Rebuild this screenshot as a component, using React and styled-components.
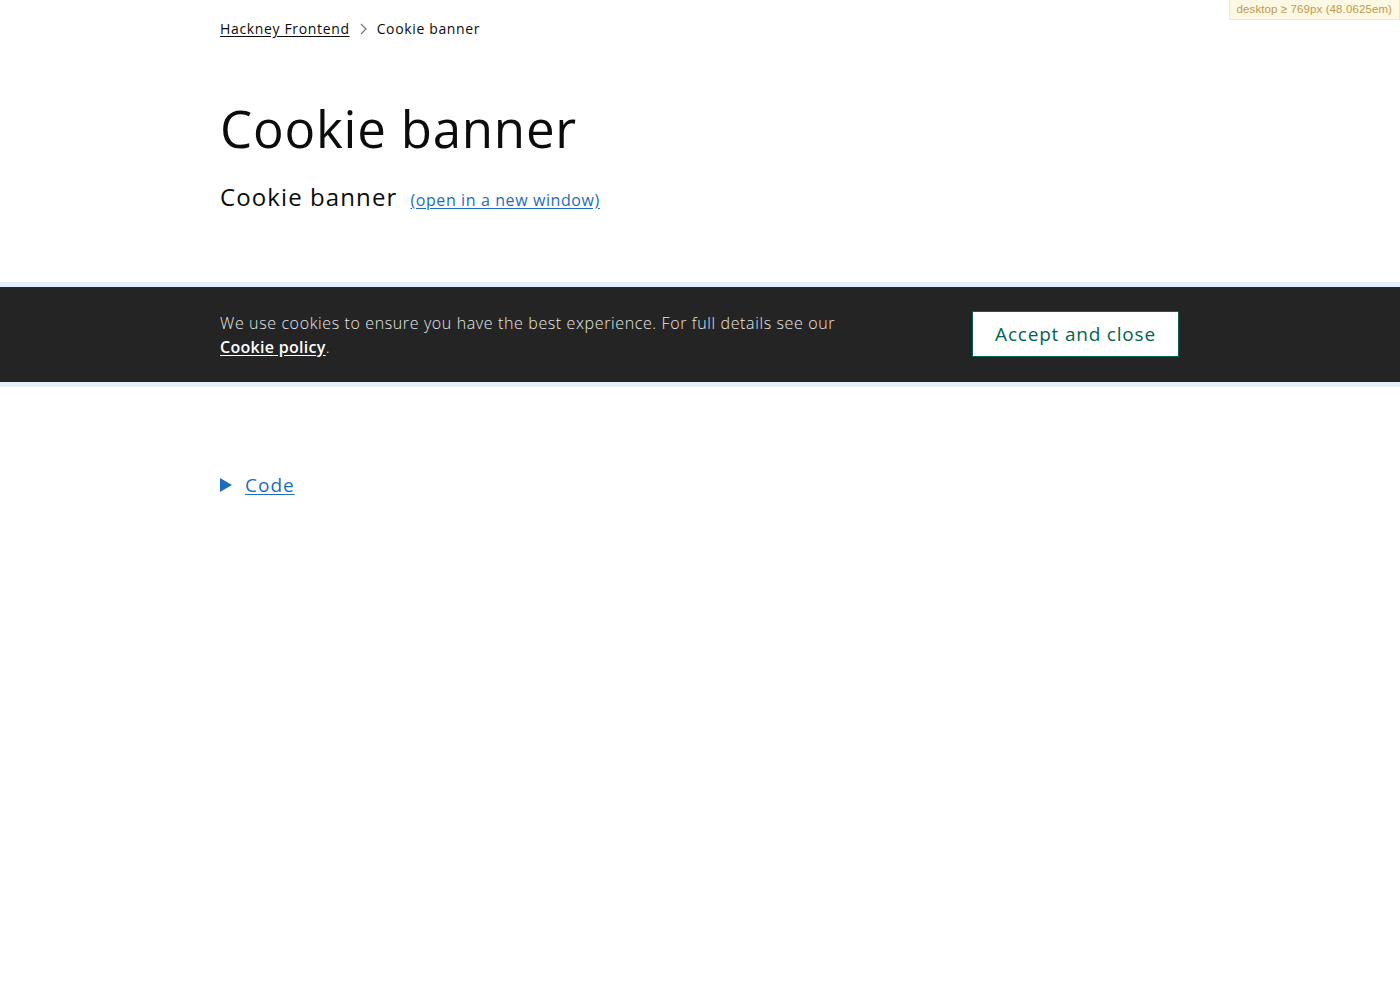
import React from "react";
import styled, { createGlobalStyle } from "styled-components";

const Global = createGlobalStyle`
    html, body {
        margin: 0;
        padding: 0;
        background: #fff;
        font-family: "Open Sans", "Liberation Sans", sans-serif;
        color: #0b0c0c;
    }
`

const MediaBadge = styled.div`
    position: absolute;
    top: 0;
    right: 0;
    padding: 2px 7px 3px;
    background: #fcf8e3;
    border: 1px solid #f3e8c3;
    border-top: 0;
    color: #c09a4b;
    font-family: "Liberation Sans", Arial, sans-serif;
    font-size: 11.5px;
    line-height: 14px;
    letter-spacing: 0.1px;
`

const Container = styled.div`
    width: 960px;
    margin: 0 auto;
`

const Breadcrumbs = styled.ol`
    display: flex;
    align-items: center;
    list-style: none;
    margin: 0;
    padding: 19px 0 0;
    font-size: 14px;
    line-height: 20px;
    letter-spacing: 0.65px;
`

const Crumb = styled.li`
    display: flex;
    align-items: center;
    color: #0b0c0c;

    a {
        color: #0b0c0c;
        text-decoration: underline;
        text-underline-offset: 2px;
    }
`

const Chevron = styled.svg`
    margin: 0 10px 0 10px;
`

const Title = styled.h1`
    margin: 58px 0 0;
    font-size: 51px;
    line-height: 62px;
    font-weight: 400;
    letter-spacing: 0.8px;
`

const SubTitle = styled.h2`
    display: flex;
    align-items: baseline;
    gap: 13px;
    margin: 22px 0 0;
    font-size: 24px;
    line-height: 32px;
    font-weight: 400;
    letter-spacing: 1.1px;
`

const Link = styled.a`
    color: ${p => p.$light ? "#fff" : "#1d6cc0"};
    font-size: ${p => p.$size || 16}px;
    font-weight: ${p => p.$light ? 600 : 400};
    letter-spacing: ${p => p.$spacing ?? 0.5}px;
    text-decoration: underline;
    text-underline-offset: 2px;
`

const Example = styled.div`
    margin-top: 66px;
    border-top: 5px solid #e3eefa;
    border-bottom: 5px solid #e3eefa;
`

const Banner = styled.div`
    background: #242424;
`

const BannerInner = styled(Container)`
    display: flex;
    align-items: center;
    justify-content: space-between;
    height: 95px;
`

const BannerText = styled.p`
    margin: 0;
    max-width: 640px;
    color: #e6e6e6;
    font-size: 16px;
    font-weight: 300;
    line-height: 24px;
    letter-spacing: 0.62px;
`

const AcceptButton = styled.button`
    width: 207px;
    height: 46px;
    margin: 0 1px 2px 0;
    background: #fff;
    border: 1px solid #00664f;
    color: #00664f;
    font-family: inherit;
    font-size: 19px;
    letter-spacing: 0.8px;
    cursor: pointer;
`

const Details = styled.div`
    display: flex;
    align-items: center;
    gap: 13px;
    margin-top: 85px;
`

export default function App() {
    return <>
        <Global />
        <MediaBadge>desktop ≥ 769px (48.0625em)</MediaBadge>
        <Container>
            <Breadcrumbs>
                <Crumb><a href="#">Hackney Frontend</a></Crumb>
                <Crumb>
                    <Chevron width="7" height="12" viewBox="0 0 7 12">
                        <path d="M1 1l5 5-5 5" fill="none" stroke="#6f777b" strokeWidth="1.2" />
                    </Chevron>
                    Cookie banner
                </Crumb>
            </Breadcrumbs>
            <Title>Cookie banner</Title>
            <SubTitle>
                Cookie banner
                <Link href="#" $spacing={0.6}>(open in a new window)</Link>
            </SubTitle>
        </Container>
        <Example>
            <Banner>
                <BannerInner>
                    <BannerText>
                        We use cookies to ensure you have the best experience. For full details see our{" "}
                        <Link href="#" $light $size={16} $spacing={0.3}>Cookie policy</Link>.
                    </BannerText>
                    <AcceptButton>Accept and close</AcceptButton>
                </BannerInner>
            </Banner>
        </Example>
        <Container>
            <Details>
                <svg width="12" height="14" viewBox="0 0 12 14">
                    <path d="M0 0l12 7-12 7z" fill="#1d6cc0" />
                </svg>
                <Link href="#" $size={19} $spacing={1}>Code</Link>
            </Details>
        </Container>
    </>
}
